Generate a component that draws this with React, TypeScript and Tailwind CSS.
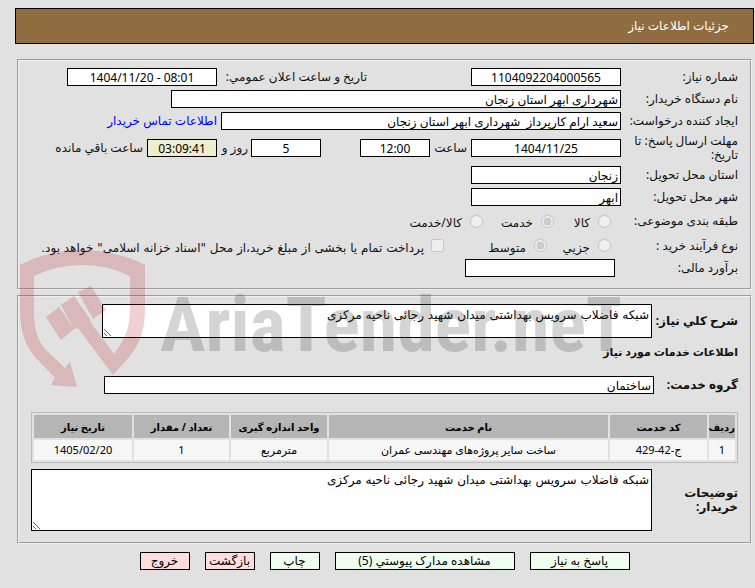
import clsx from "clsx";
import React, { FC, ReactNode } from "react";

interface IFieldProps {
  id: string;
  value?: string;
  className?: string;
}

interface IRowProps {
  label: string;
  htmlFor?: string;
  className?: string;
  children: ReactNode;
}

interface IChoiceProps {
  id: string;
  name: string;
  label: string;
  checked?: boolean;
  className?: string;
}

const services = [
  {
    row: "1",
    code: "ج-42-429",
    name: "ساخت سایر پروژه‌های مهندسی عمران",
    unit: "مترمربع",
    count: "1",
    date: "1405/02/20",
  },
];

const columns = [
  { title: "ردیف", width: "w-[26px]" },
  { title: "کد خدمت", width: "w-[97px]" },
  { title: "نام خدمت", width: "w-auto" },
  { title: "واحد اندازه گیری", width: "w-[96px]" },
  { title: "تعداد / مقدار", width: "w-[95px]" },
  { title: "تاریخ نیاز", width: "w-[98px]" },
];

const description = "شبکه فاضلاب سرویس بهداشتی میدان شهید رجائی ناحیه مرکزی";

const Field: FC<IFieldProps> = ({ id, value = "", className }) => (
  <input
    id={id}
    type="text"
    readOnly
    defaultValue={value}
    className={clsx(
      "h-[18px] shrink-0 border border-black px-0.5 text-xs leading-4 text-black outline-none",
      className
    )}
  />
);

const Row: FC<IRowProps> = ({ label, htmlFor, className, children }) => (
  <div className={clsx("flex items-center", className)}>
    {htmlFor ? (
      <label htmlFor={htmlFor} className="w-[117px] shrink-0">
        {label}
      </label>
    ) : (
      <span className="w-[117px] shrink-0">{label}</span>
    )}
    {children}
  </div>
);

const Choice: FC<IChoiceProps> = ({ id, name, label, checked, className }) => (
  <div className={clsx("flex shrink-0 items-center gap-2", className)}>
    <input
      id={id}
      type="radio"
      name={name}
      disabled
      defaultChecked={checked}
      className="size-[13px] shrink-0"
    />
    <label htmlFor={id} className="pt-1 whitespace-nowrap">
      {label}
    </label>
  </div>
);

const Watermark: FC = () => (
  <svg
    viewBox="0 0 620 150"
    aria-hidden="true"
    className="pointer-events-none absolute top-[245px] left-0 h-[150px] w-[620px]"
  >
    <g fill="#b41414" fillOpacity="0.2">
      <path d="M20 20Q48 5 82 5Q116 5 145 20V62C145 92 138 104 113 130L78 83L74 84L61 60L74 51L90 74L91 78L114 109C125 94 130 84 130 62V31Q108 20 82 20Q57 20 34 31V62C34 85 37 95 47 106L65 123L70 117L77 142L51 140L55 133L36 113C24 100 20 84 20 62Z" />
      <path d="M46 72L59 62L74 84L61 95Z" />
      <path d="M78 47L91 41L106 65L93 74Z" />
    </g>
    <text
      x="160"
      y="106"
      direction="ltr"
      fill="#3c3c3c"
      fillOpacity="0.22"
      className="font-['Liberation_Sans_Narrow','Roboto_Condensed','Liberation_Sans',sans-serif] text-[76px] font-bold"
    >
      AriaTender.neT
    </text>
  </svg>
);

const App: FC = () => {
  return (
    <div
      dir="rtl"
      lang="fa"
      className="relative min-h-screen bg-[#e1e1e1] pt-2 pr-px pb-4 pl-[15px] font-['Noto_Sans','DejaVu_Sans',sans-serif] text-xs leading-[14px] text-[#111]"
    >
      <header className="flex h-9 items-center border border-black bg-[#8f6d40] px-6 text-white">
        <h1>جزئیات اطلاعات نیاز</h1>
      </header>

      <main className="pt-[15px] pr-0.5 pl-0.5">
        <fieldset className="flex flex-col gap-1 border-2 border-[#f0f0f0] px-3 pt-[7px] pb-[11px] [border-style:groove]">
          <Row label="شماره نیاز:" htmlFor="number">
            <Field id="number" value="1104092204000565" className="w-[150px] bg-white text-center" />
            <label htmlFor="announce" className="ms-[104px] w-[150px] shrink-0">
              تاریخ و ساعت اعلان عمومي:
            </label>
            <input
              id="announce"
              type="text"
              dir="ltr"
              readOnly
              defaultValue="1404/11/20 - 08:01"
              className="h-[18px] w-[150px] shrink-0 border border-black bg-white text-center text-xs leading-4 text-black"
            />
          </Row>
          <Row label="نام دستگاه خریدار:" htmlFor="buyer">
            <Field id="buyer" value="شهرداری ابهر استان زنجان" className="w-[450px] bg-white" />
          </Row>
          <Row label="ایجاد کننده درخواست:" htmlFor="creator">
            <Field
              id="creator"
              value="سعید ارام کارپرداز  شهرداری ابهر استان زنجان"
              className="w-[400px] bg-white"
            />
            <a href="#contact" className="ms-1 whitespace-nowrap text-[#0000ff]">
              اطلاعات تماس خریدار
            </a>
          </Row>
          <Row label="مهلت ارسال پاسخ: تا تاریخ:" htmlFor="deadline">
            <Field id="deadline" value="1404/11/25" className="w-[150px] bg-white text-center" />
            <label htmlFor="hour" className="w-[41px] shrink-0 ps-1">
              ساعت
            </label>
            <Field id="hour" value="12:00" className="w-[70px] bg-white text-center" />
            <Field id="days" value="5" className="ms-[39px] w-[70px] bg-white text-center" />
            <label htmlFor="days" className="w-[34px] shrink-0 ps-[3px] whitespace-nowrap">
              روز و
            </label>
            <Field id="left" value="03:09:41" className="w-[70px] bg-[#eeeecc] text-center" />
            <label htmlFor="left" className="ms-1 whitespace-nowrap">
              ساعت باقي مانده
            </label>
          </Row>
          <Row label="استان محل تحویل:" htmlFor="province">
            <Field id="province" value="زنجان" className="w-[150px] bg-white" />
          </Row>
          <Row label="شهر محل تحویل:" htmlFor="city">
            <Field id="city" value="ابهر" className="w-[150px] bg-white" />
          </Row>
          <Row label="طبقه بندی موضوعی:" className="h-[22px]">
            <Choice id="goods" name="subject" label="کالا" className="ms-2.5 w-[57px]" />
            <Choice id="service" name="subject" label="خدمت" checked className="w-[71px]" />
            <Choice id="both" name="subject" label="کالا/خدمت" />
          </Row>
          <Row label="نوع فرآیند خرید :" className="h-[19px]">
            <Choice id="small" name="process" label="جزیي" className="ms-2.5 w-[64px]" />
            <Choice id="medium" name="process" label="متوسط" checked className="w-[103px]" />
            <div className="flex items-center gap-[7px]">
              <input id="treasury" type="checkbox" disabled className="size-[13px] shrink-0" />
              <label
                htmlFor="treasury"
                className="pt-1 font-['DejaVu_Sans',sans-serif] whitespace-nowrap"
              >
                پرداخت تمام یا بخشی از مبلغ خرید،از محل "اسناد خزانه اسلامی" خواهد بود.
              </label>
            </div>
          </Row>
          <Row label="برآورد مالی:" htmlFor="estimate">
            <Field id="estimate" className="ms-1.5 w-[150px] bg-white" />
          </Row>
        </fieldset>

        <fieldset className="mt-[5px] border-2 border-[#f0f0f0] px-3 pt-[7px] pb-[11px] [border-style:groove]">
          <div className="flex items-center">
            <label htmlFor="summary" className="w-[86px] shrink-0 font-bold whitespace-nowrap">
              شرح كلي نیاز:
            </label>
            <textarea
              id="summary"
              readOnly
              defaultValue={description}
              className="block h-[34px] w-[550px] border border-black bg-white px-0.5 py-[3px] font-['DejaVu_Sans',sans-serif] text-black"
            />
          </div>
          <h2 className="mt-[7px] mb-[17px] text-[11px] leading-[14px] font-bold">
            اطلاعات خدمات مورد نیاز
          </h2>
          <div className="flex items-center">
            <label htmlFor="group" className="w-[84px] shrink-0 font-bold">
              گروه خدمت:
            </label>
            <Field id="group" value="ساختمان" className="w-[550px] bg-white" />
          </div>

          <table className="mt-[18px] w-full table-fixed border-separate border-spacing-0.5 border border-[#bbb] text-center text-[11px] leading-[14px] text-black">
            <thead>
              <tr className="h-[23px] text-[10px]">
                {columns.map((column) => (
                  <th
                    key={column.title}
                    className={clsx("bg-[#b5b5b5] p-0 font-bold whitespace-nowrap", column.width)}
                  >
                    {column.title}
                  </th>
                ))}
              </tr>
            </thead>
            <tbody>
              {services.map((item) => (
                <tr key={item.code} className="h-5">
                  <td className="bg-[#f6f6f6] p-0">{item.row}</td>
                  <td className="bg-[#f6f6f6] p-0">{item.code}</td>
                  <td className="bg-[#f6f6f6] p-0">{item.name}</td>
                  <td className="bg-[#f6f6f6] p-0">{item.unit}</td>
                  <td className="bg-[#f6f6f6] p-0">{item.count}</td>
                  <td className="bg-[#f6f6f6] p-0">{item.date}</td>
                </tr>
              ))}
            </tbody>
          </table>

          <div className="mt-1.5 flex items-center">
            <label htmlFor="notes" className="w-[86px] shrink-0 font-bold">
              توضیحات
              <br />
              خریدار:
            </label>
            <textarea
              id="notes"
              readOnly
              defaultValue={description}
              className="block h-[62px] min-w-0 flex-1 border border-black bg-white px-0.5 py-[3px] font-['DejaVu_Sans',sans-serif] text-black"
            />
          </div>
        </fieldset>

        <div className="mt-2 flex justify-center gap-[15px] text-black">
          <button type="button" className="h-[18px] w-[100px] border border-black bg-[#eeffee]">
            پاسخ به نیاز
          </button>
          <button type="button" className="h-[18px] w-[180px] border border-black bg-[#eeffee]">
            مشاهده مدارک پیوستي (5)
          </button>
          <button type="button" className="h-[18px] w-[50px] border border-black bg-[#eeffee]">
            چاپ
          </button>
          <button type="button" className="h-[18px] w-[50px] border border-black bg-[#ffdddd]">
            بازگشت
          </button>
          <button type="button" className="h-[18px] w-[50px] border border-black bg-[#ffdddd]">
            خروج
          </button>
        </div>
      </main>

      <Watermark />
    </div>
  );
};

export default App;
